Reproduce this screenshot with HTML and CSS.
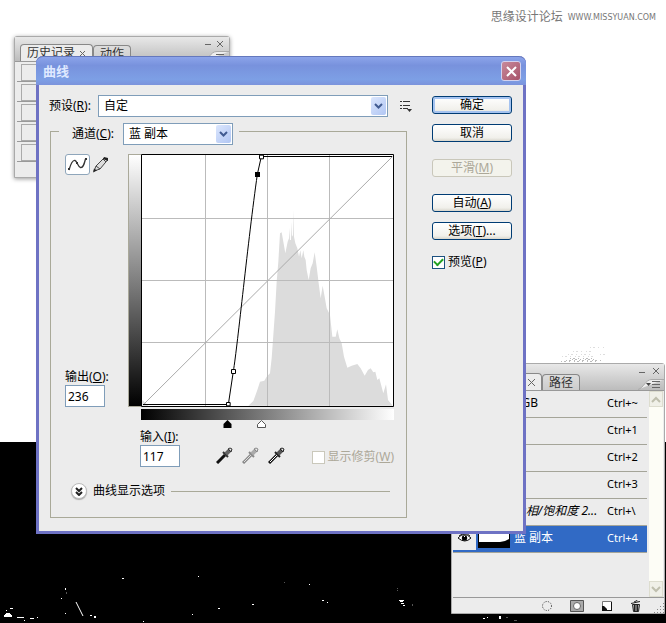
FILE: index.html
```html
<!DOCTYPE html>
<html lang="zh-CN">
<head>
<meta charset="utf-8">
<title>曲线</title>
<link rel="stylesheet" href="styles.css">
</head>
<body>
<main class="desktop">
  <svg class="specks" viewBox="0 0 666 623" preserveAspectRatio="none" aria-hidden="true">
    <g fill="none" stroke="#fff">
      <path d="M76 602l7 14"/>
      <path d="M4 616.500h8M4 615.500h8M5 614.500h6M6 613.500h4M10 608.500h3M6 610.500h1M17 617.500h7M30 618.500h4M24 620.500h1M37 617.500h1M90 615.500h2M94 616.500h2M94 617.500h2M122 578.500h2M198 576.500h1M218 608.500h2M252 604.500h2M192 614.500h1M309 584.500h1M322 600.500h2M327 602.500h1M399 600.500h5M400 601.500h3M401 603.500h3M403 605.500h2M65.500 588v2M61 598.500h1M143 621.500h1M65 613.500h1M483 618.500h2M499.500 616v3M500.500 616v3M487 617.500h1"/>
      <path stroke="#555" d="M284 582.500h1M397 590.500h1M412.500 604v2M66.500 592v2M506 617.500h2M514 620.500h3M397 588.500h1"/>
    </g>
    <g fill="none" stroke="#bbb" stroke-dasharray="1 2 2 3 1 4">
      <path stroke="#ddd" d="M562 356.500h34M573 351.500h20M590 347.500h16M600 354.500h8M568 354.500h26"/>
      <path d="M566 360.500h35M572 359.500h26M561 361.500h36M570 358.500h22"/>
    </g>
  </svg>

  <p class="credit">思缘设计论坛 <small>WWW.MISSYUAN.COM</small></p>

  <section class="panel history">
    <header class="panel-head">
      <div class="tabs">
        <button class="tab on">历史记录 <svg width="7" height="7" viewBox="0 0 7 7"><path d="M1 1l5 5M6 1l-5 5"/></svg></button>
        <button class="tab">动作</button>
      </div>
      <svg class="panel-tools" width="26" height="25" viewBox="0 0 26 25"><path fill="#eee" stroke="#aaa" d="M0 24.500C6 23 7 14.500 14 14.500H26"/><path d="M2 7.500h6M14 4l6 6M20 4l-6 6M13 17.500h8M13 20.500h8"/></svg>
    </header>
    <ul class="steps"><li></li><li></li><li></li><li></li><li></li></ul>
  </section>

  <section class="panel channels">
    <header class="panel-head">
      <div class="tabs">
        <button class="tab on">通道 <svg width="7" height="7" viewBox="0 0 7 7"><path d="M0 0l7 7M7 0l-7 7"/></svg></button>
        <button class="tab">路径</button>
      </div>
      <svg class="panel-tools" width="26" height="26" viewBox="0 0 26 26"><path fill="#eee" stroke="#aaa" d="M0 25.500C6 24 7 15.500 14 15.500H26"/><path d="M1 8.500h6M15 4l6 6M21 4l-6 6M14 17.500h8M14 20.500h8M14 23.500h8"/><path fill="#444" stroke="none" d="M8 19h5l-2.500 3z"/></svg>
    </header>
    <div class="panel-body">
      <ul class="rows">
        <li><i class="eye"></i><i class="thumb"></i><span>RGB</span><kbd>Ctrl+~</kbd></li>
        <li><i class="eye"></i><i class="thumb"></i><span>红</span><kbd>Ctrl+1</kbd></li>
        <li><i class="eye"></i><i class="thumb"></i><span>绿</span><kbd>Ctrl+2</kbd></li>
        <li><i class="eye"></i><i class="thumb"></i><span>蓝</span><kbd>Ctrl+3</kbd></li>
        <li><i class="eye"></i><i class="thumb"></i><span class="mask">色相/饱和度 2...</span><kbd>Ctrl+\</kbd></li>
        <li class="active"><i class="eye"><svg width="13" height="10" viewBox="0 0 13 10"><path d="M0 5q6-7 13 0q-6 6-13 0z" fill="#fff" stroke="#111"/><circle cx="6.500" cy="5" r="2.700"/><path d="M1 3q6-5 11 0" fill="none" stroke="#111"/><path d="M6 3h1v1H6z" fill="#fff"/></svg></i><i class="thumb"><svg width="32" height="20" viewBox="0 0 32 20"><path d="M0 0h32v20H0z"/><path fill="#fff" d="M1 1h30v10l-4 2-5 1H1z"/></svg></i><span>蓝 副本</span><kbd>Ctrl+4</kbd></li>
      </ul>
      <div class="scroll">
        <button aria-label="向上滚动"><svg width="10" height="7" viewBox="0 0 10 7"><path d="M1 6l4-4 4 4"/></svg></button>
        <button aria-label="向下滚动"><svg width="10" height="7" viewBox="0 0 10 7"><path d="M1 1l4 4 4-4"/></svg></button>
      </div>
    </div>
    <footer class="panel-foot">
      <button aria-label="载入选区"><svg width="12" height="12" viewBox="0 0 12 12"><circle cx="6" cy="6" r="4.500" fill="none" stroke="#333" stroke-dasharray="1 1.400"/></svg></button>
      <button aria-label="存储选区"><svg width="14" height="12" viewBox="0 0 14 12"><path fill="#aaa" stroke="#555" d="M.5.5h13v11H.5z"/><circle cx="7" cy="6" r="3.500" fill="#fff" stroke="#666"/></svg></button>
      <button aria-label="新建通道"><svg width="12" height="12" viewBox="0 0 12 12"><path fill="#fff" stroke="#777" d="M1.500 1.500h9v9h-9z"/><path fill="#111" d="M1 6h5v5H1zM1 10h10v1H1zM10 2h1v9h-1z"/><path fill="#fff" d="M3 6h3v3z"/></svg></button>
      <button aria-label="删除通道"><svg width="12" height="12" viewBox="0 0 12 12"><path fill="#bbb" stroke="#222" d="M2.500 4.500h7l-1 7h-5z"/><path fill="none" stroke="#222" d="M1 3.500l9-2M4 2l3-1.500 1 1M4.500 5v6M6 5v6M7.500 5v6"/></svg></button>
      <svg class="grip" width="10" height="10" viewBox="0 0 10 10"><path stroke="#888" stroke-dasharray="1 2" d="M9 .5h1M6 3.500h4M3 6.500h7M0 9.500h10"/></svg>
    </footer>
  </section>

  <form class="dialog">
    <header class="titlebar">
      <h1>曲线</h1>
      <button type="button" class="close" aria-label="关闭"><svg width="13" height="13" viewBox="0 0 13 13"><path d="M2 2l9 9M11 2l-9 9"/></svg></button>
    </header>
    <div class="content">
      <div class="settings">
        <div class="preset">
          <label for="preset">预设(<u>R</u>):</label>
          <span class="select wide">
            <select id="preset"><option>自定</option></select>
            <svg width="15" height="18" viewBox="0 0 15 18"><path d="M4 7l3.500 3.500L11 7"/></svg>
          </span>
          <button type="button" class="plain" aria-label="预设选项"><svg width="12" height="12" viewBox="0 0 12 12"><path fill="none" stroke="#333" d="M0 1.500h2M0 5.500h2M0 8.500h2M3 1.500h7M3 5.500h7M3 8.500h5"/><path fill="#333" d="M7 9h5l-2.500 3z"/></svg></button>
        </div>

        <fieldset>
          <legend>
            <label for="channel">通道(<u>C</u>):</label>
            <span class="select">
              <select id="channel"><option>蓝 副本</option></select>
              <svg width="15" height="18" viewBox="0 0 15 18"><path d="M4 7l3.500 3.500L11 7"/></svg>
            </span>
          </legend>

          <div class="graph">
            <div class="side">
              <div class="modes">
                <button type="button" class="mode on" aria-label="编辑点"><svg width="19" height="13" viewBox="0 0 19 13"><path fill="none" stroke="#333" stroke-width="1.300" d="M1 12C3 5 5 2 7 2.500S10 9 12.500 9.500 16 7 17.500 1"/><path fill="#333" d="M0 10h2v2H0zM17 0h2v2h-2zM8 4h2v2H8z"/></svg></button>
                <button type="button" class="mode" aria-label="铅笔"><svg width="16" height="17" viewBox="0 0 16 17"><path fill="#ddd" stroke="#444" d="M1 15l2-5 8-8 3.500 2-7.500 9z"/><path stroke="#444" fill="none" d="M3 10l4 3M10 3l3 3"/><path fill="#222" d="M0 16.500l1-4 3 2zM11 1l4 1v3l-5-2z"/></svg></button>
              </div>
              <div class="field">
                <label for="output">输出(<u>O</u>):</label>
                <input id="output" type="text" value="236">
              </div>
            </div>
            <div class="ramp-v"></div>
            <svg class="plot" viewBox="63 27 759 759" role="img" aria-label="曲线图">
              <path fill="#fff" stroke="#000" stroke-width="3" d="M64.500 28.500h756v756h-756z"/>
              <path fill="#dcdcdc" d="M385 782L400 768 412 735 420 710 433 707 440 695 450 685 455 640 460 570 465 500 470 410 475 350 480 265 485 262 490 290 496 325 503 290 507 280 508 248 510 285 513 285 514 230 516 275 519 270 520 195 522 275 526 295 532 310 537 335 541 316 545 340 550 316 553 335 557 345 560 375 566 405 572 370 578 355 584 322 590 365 596 415 602 460 608 422 614 455 620 490 630 510 637 575 647 575 652 553 658 580 665 595 672 635 682 668 695 662 712 657 722 670 734 692 744 675 752 670 760 682 766 680 772 705 778 700 782 715 790 745 798 718 804 765 812 775 818 782zM67 765l18 17H67z"/>
              <path fill="none" stroke="#bbb" stroke-width="3" d="M256.500 30v753M442.500 30v753M628.500 30v753M66 220.500h753M66 406.500h753M66 592.500h753"/>
              <path stroke="#aaa" stroke-width="3" d="M69 780L818 34"/>
              <path fill="none" stroke="#000" stroke-width="3" d="M69 778.500H325L340 679C353 600 384 285 412 88L424 34.500H816"/>
              <path fill="#fff" stroke="#000" stroke-width="3" d="M319.500 772.500h11v10h-11zM334.500 673.500h12v12h-12zM418.500 30.500h12v11h-12z"/>
              <path d="M405 81h15v15h-15z"/>
            </svg>
            <div class="ramp-h"></div>
            <svg class="stops" viewBox="0 0 253 9"><path d="M86.500 0l4 4v4h-8V4z"/><path fill="#fff" stroke="#555" d="M120.500.5l4 4v3h-8v-3z"/></svg>
          </div>

          <div class="values">
            <div class="field">
              <label for="input">输入(<u>I</u>):</label>
              <input id="input" type="text" value="117">
            </div>
            <div class="droppers">
              <button type="button" class="plain" aria-label="设置黑场"><svg width="17" height="17" viewBox="0 0 17 17"><path stroke="#111" stroke-width="3" d="M1 16l8-8"/><path stroke="#333" stroke-width="2" d="M7 5l5 5"/><path stroke="#666" stroke-width="4" d="M10 7l4-4"/><path stroke="#333" fill="none" d="M12 2l3 3 1-3-2-1z"/></svg></button>
              <button type="button" class="plain" aria-label="设置灰场"><svg width="17" height="17" viewBox="0 0 17 17"><path stroke="#888" stroke-width="3" d="M1 16l8-8"/><path stroke="#ddd" d="M2 15l7-7"/><path stroke="#888" stroke-width="2" d="M7 5l5 5"/><path stroke="#aaa" stroke-width="4" d="M10 7l4-4"/><path stroke="#888" fill="none" d="M12 2l3 3 1-3-2-1z"/></svg></button>
              <button type="button" class="plain" aria-label="设置白场"><svg width="17" height="17" viewBox="0 0 17 17"><path stroke="#111" stroke-width="3" d="M1 16l8-8"/><path stroke="#fff" d="M2 15l7-7"/><path stroke="#222" stroke-width="2" d="M7 5l5 5"/><path stroke="#555" stroke-width="4" d="M10 7l4-4"/><path stroke="#222" fill="none" d="M12 2l3 3 1-3-2-1z"/></svg></button>
            </div>
            <label class="check off"><input type="checkbox" disabled>显示修剪(<u>W</u>)</label>
          </div>

          <div class="more">
            <button type="button" class="round" aria-label="展开"><svg width="8" height="9" viewBox="0 0 8 9"><path d="M1 1l3 3 3-3M1 5l3 3 3-3"/></svg></button>
            <span>曲线显示选项</span>
            <hr>
          </div>
        </fieldset>
      </div>

      <div class="actions">
        <button type="submit" class="btn primary">确定</button>
        <button type="button" class="btn">取消</button>
        <button type="button" class="btn apart" disabled>平滑(<u>M</u>)</button>
        <button type="button" class="btn apart">自动(<u>A</u>)</button>
        <button type="button" class="btn">选项(<u>T</u>)...</button>
        <label class="check"><input type="checkbox" checked>预览(<u>P</u>)</label>
      </div>
    </div>
  </form>
</main>
</body>
</html>
```

FILE: styles.css
```css
* { box-sizing: border-box; }

body {
  margin: 0;
  font: 12px/16px "Noto Sans", "Noto Sans CJK SC", sans-serif;
  color: #000;
}

button, select, input { font: inherit; color: inherit; margin: 0; }
button { padding: 0; }
ul { list-style: none; margin: 0; padding: 0; }
svg { display: block; flex: none; }
label { white-space: nowrap; }

.desktop {
  position: relative;
  min-height: 100vh;
  overflow: hidden;
  background: linear-gradient(#fff 71%, #000 71%);
}

.specks { position: absolute; inset: 0; width: 100%; height: 100%; }

.credit {
  position: relative;
  display: flex;
  justify-content: flex-end;
  align-items: center;
  gap: 5px;
  margin: 0;
  padding: 8px 10px 0 0;
  color: #777;
}

.credit small { font: 8px/16px "DejaVu Sans", sans-serif; padding-top: 2px; }

/* Floating palettes */
.panel {
  position: absolute;
  display: flex;
  flex-direction: column;
  background: #ececec;
  border: 1px solid #aaa;
  border-radius: 3px 3px 0 0;
  box-shadow: 0 1px 4px #999;
}

.history { left: 14px; top: 36px; width: 216px; height: 142px; }
.channels { left: 451px; top: 363px; width: 214px; height: 251px; box-shadow: none; }

.panel-head {
  display: flex;
  justify-content: space-between;
  height: 27px;
  flex: none;
  background: linear-gradient(#e8e8e8, #bcbcbc);
  border-bottom: 1px solid #999;
}

.history .panel-head { height: 25px; }

.tabs { display: flex; align-items: flex-end; padding-left: 5px; }
.channels .tabs { padding-left: 41px; }

.tab {
  display: flex;
  align-items: center;
  gap: 4px;
  height: 16px;
  padding: 0 6px;
  border: 1px solid #888;
  border-bottom: 0;
  border-radius: 4px 4px 0 0;
  background: linear-gradient(#ddd, #ccc);
  color: #333;
}

.tab.on { background: #ececec; height: 17px; }
.tab svg, .panel-tools { fill: none; stroke: #666; }

.steps { padding: 0 2px; }
.steps li { height: 20px; border-bottom: 1px solid #999; }
.steps li::before { content: ""; display: block; width: 20px; height: 15px; margin: 2px 4px; border: 1px solid #aaa; }
.steps li { display: flex; }

.panel-body { display: flex; flex: 1; min-height: 0; padding-left: 1px; }
.rows { flex: 1; }

.rows li {
  display: flex;
  align-items: center;
  height: 27px;
  padding-bottom: 2px;
  border-bottom: 1px solid #a5a599;
}

.eye { width: 23px; flex: none; display: flex; justify-content: center; align-self: stretch; align-items: center; }
.active .eye { background: #ececec; }
.thumb { width: 32px; height: 20px; flex: none; margin: 0 4px 0 2px; background: #fff; }
.mask { font-style: italic; white-space: nowrap; }
.rows kbd { width: 40px; margin-left: auto; font: 11px/16px "Noto Sans", sans-serif; }
.rows .active { background: #316ac5; color: #fff; }

.scroll {
  width: 14px;
  margin: 0 1px 0 2px;
  display: flex;
  flex-direction: column;
  justify-content: space-between;
  background: #fdfdf6;
}

.scroll button {
  display: grid;
  place-items: center;
  height: 16px;
  border: 1px solid #ddddcf;
  background: #f0f0e8;
}

.scroll path { fill: none; stroke: #bfbfae; stroke-width: 2; }

.panel-foot {
  display: flex;
  align-items: center;
  justify-content: flex-end;
  gap: 17px;
  height: 16px;
  margin-left: 1px;
  border-top: 1px solid #999;
}

.panel-foot button, .plain { border: 0; background: none; }
.grip { align-self: flex-end; margin-left: -5px; }

/* Curves dialog */
.dialog {
  position: absolute;
  left: 36px;
  top: 56px;
  width: 490px;
  background: #ececec;
  border: 3px solid #6e72c4;
  border-top: 0;
  border-radius: 7px 7px 0 0;
}

.titlebar {
  display: flex;
  align-items: center;
  justify-content: space-between;
  height: 29px;
  margin: 0 -3px;
  padding: 0 5px 0 7px;
  border-top: 1px solid #6478bd;
  border-radius: 7px 7px 0 0;
  background: linear-gradient(#8ca4ea, #7892dd 30%, #7d9fe5 80%, #7b93dc);
}

.titlebar h1 { margin: 0; font-size: 13px; color: #dfe9ff; }

.close {
  display: grid;
  place-items: center;
  width: 20px;
  height: 20px;
  border: 1px solid #d3d2ee;
  border-radius: 3px;
  background: linear-gradient(135deg, #c88a9b, #a75369);
}

.close path { stroke: #fff; stroke-width: 2; }

.content { display: flex; justify-content: space-between; padding: 10px 11px 13px 10px; }
.settings { width: 363px; }

.preset { display: flex; align-items: center; height: 22px; }
.preset label { width: 51px; }
.preset .plain { margin-left: 12px; }

.select { position: relative; display: block; width: 110px; height: 22px; flex: none; }
.select.wide { width: 290px; }

.select select {
  appearance: none;
  width: 100%;
  height: 100%;
  padding: 0 5px;
  border: 1px solid #7f9db9;
  border-radius: 0;
  background: #fff;
}

.select svg {
  position: absolute;
  right: 2px;
  top: 2px;
  border-radius: 2px;
  background: linear-gradient(135deg, #dbe6fd, #b1c6f3);
  pointer-events: none;
}

.select path { fill: none; stroke: #415b91; stroke-width: 2; }

fieldset {
  min-width: 0;
  width: 357px;
  height: 395px;
  margin: 6px 0 0 1px;
  padding: 15px 12px 0 14px;
  border: 1px solid #a9a998;
}

legend { display: flex; height: 16px; margin-left: -6px; padding: 0 6px 0 13px; }
legend label { width: 51px; padding-top: 3px; }

.graph { display: grid; grid-template-columns: 63px 13px 253px; }
.side { display: flex; flex-direction: column; justify-content: space-between; align-items: flex-start; }
.modes { display: flex; gap: 3px; }

.mode { display: grid; place-items: center; border: 0; background: none; }
.mode.on { width: 25px; height: 21px; border: 1px solid #8fa6bb; border-radius: 3px; background: #fff; }

.field { display: flex; flex-direction: column; }

.field input {
  width: 40px;
  height: 22px;
  padding: 0 2px;
  border: 1px solid #7f9db9;
  background: #fff;
}

.ramp-v { border: 1px solid #aaa99a; border-right: 0; background: linear-gradient(#fff, #000); }
.plot { width: 253px; height: 253px; }
.ramp-h { grid-column: 3; height: 11px; margin-top: 2px; background: linear-gradient(90deg, #000, #fff); }
.stops { grid-column: 3; width: 253px; height: 9px; }

.values { display: flex; align-items: flex-end; margin-left: 75px; height: 38px; }
.droppers { display: flex; gap: 9px; width: 96px; margin: 0 0 3px 36px; }
.droppers svg { fill: none; }

.check { display: flex; align-items: center; }
.values .check { margin-bottom: 2px; }
.check.off { color: #aca899; }

.check input {
  appearance: none;
  display: grid;
  place-items: center;
  width: 13px;
  height: 13px;
  flex: none;
  margin-right: 3px;
  border: 1px solid #1c5180;
  background: #fff;
}

.check input:checked::before {
  content: "";
  width: 7px;
  height: 4px;
  margin-bottom: 2px;
  border: solid #21a121;
  border-width: 0 0 2px 2px;
  transform: rotate(-45deg);
}

.check input:disabled { border-color: #cac8bb; }

.more { display: flex; align-items: center; margin: 16px 4px 0 6px; }
.more span { margin: 0 6px; white-space: nowrap; }
.more hr { flex: 1; margin: 0; border: 0; border-top: 1px solid #a9a998; }

.round {
  display: grid;
  place-items: center;
  width: 16px;
  height: 16px;
  border: 1px solid #bbb;
  border-radius: 50%;
  background: #fff;
  box-shadow: 0 1px 1px #aaa;
}

.round path { fill: none; stroke: #222; stroke-width: 2; }

.actions { display: flex; flex-direction: column; width: 80px; padding-top: 1px; }

.btn {
  height: 18px;
  margin-bottom: 10px;
  border: 1px solid #003c74;
  border-radius: 3px;
  background: linear-gradient(#fff, #f1f0eb 80%, #d9d6cc);
}

.btn.primary { box-shadow: inset 0 0 0 2px #a5c3f0; }
.btn.apart { margin-top: 7px; }
.btn:disabled { border-color: #c9c7ba; background: #f3f3ec; color: #aca899; }
.actions .check { margin-top: 4px; }
```
